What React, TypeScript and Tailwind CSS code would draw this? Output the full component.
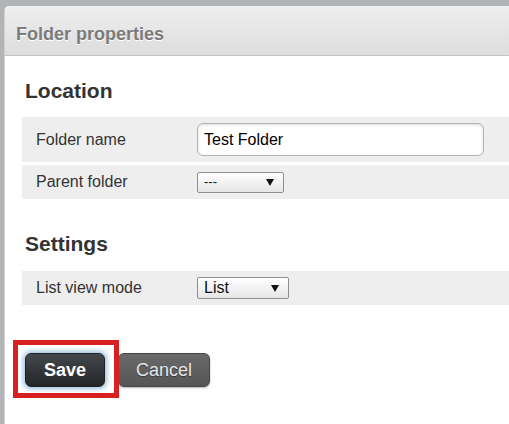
const Arrow = () => (
  <svg width="8" height="7" viewBox="0 0 8 7" className="shrink-0">
    <polygon points="0,0 8,0 4,7" fill="#111" />
  </svg>
);

const FakeSelect = ({ value, width, height, textSize }: { value: string; width: string; height: string; textSize: string }) => (
  <div
    className={`${width} ${height} flex items-center justify-between pl-[6px] pr-[9px] border border-[#8f8f8f] rounded-[2px] bg-gradient-to-b from-white to-[#e6e6e6] text-[#111] ${textSize}`}
  >
    <span>{value}</span>
    <Arrow />
  </div>
);

const Row = ({ label, children, height, className = "" }: { label: string; children: React.ReactNode; height: string; className?: string }) => (
  <div className={`flex items-center bg-[#eeeeee] ${height} ${className}`}>
    <div className="w-[175px] pl-[14px] text-[16px] text-[#333]">{label}</div>
    {children}
  </div>
);

export default function App() {
  return (
    <div className="h-[424px] overflow-hidden bg-[#b2b5b7] pl-[4px] pt-[6px] font-['Liberation_Sans',Arial,sans-serif]">
      <div className="h-full bg-white rounded-tl-[5px] border-l border-[#d0d0d0]">
        {/* header */}
        <div className="h-[50px] rounded-tl-[5px] bg-gradient-to-b from-[#efefef] to-[#dddddd] border-b border-[#c4c4c4] pl-[11px] pt-[18px]">
          <h1 className="text-[18px] leading-[21px] font-bold text-[#7b7b7b] [text-shadow:0_1px_0_#fff]">Folder properties</h1>
        </div>

        <div className="pl-[17px] pt-[23px]">
          <h2 className="ml-[3px] mb-[14px] text-[21px] leading-[24px] font-bold text-[#333]">Location</h2>
          <Row label="Folder name" height="h-[45px]">
            <div className="w-[287px] h-[33px] flex items-center pl-[6px] border border-[#b4b4b4] rounded-[6px] bg-white shadow-[inset_0_1px_3px_rgba(0,0,0,0.15)] text-[16px] text-black">
              Test Folder
            </div>
          </Row>
          <Row label="Parent folder" height="h-[34px]" className="mt-[3px]">
            <FakeSelect value="---" width="w-[87px]" height="h-[21px]" textSize="text-[13px]" />
          </Row>

          <h2 className="ml-[3px] mt-[33px] mb-[15px] text-[21px] leading-[24px] font-bold text-[#333]">Settings</h2>
          <Row label="List view mode" height="h-[34px]">
            <FakeSelect value="List" width="w-[92px]" height="h-[22px]" textSize="text-[16px]" />
          </Row>

          <div className="flex gap-[13px] mt-[48px] ml-[3px]">
            <div className="relative">
              <button className="w-[80px] h-[34px] rounded-[6px] border border-[#1e2124] bg-gradient-to-b from-[#44484c] to-[#232629] text-white text-[18px] font-bold shadow-[0_0_5px_2px_rgba(120,175,215,0.75)]">
                Save
              </button>
              <div className="absolute -left-[12px] -top-[13px] w-[106px] h-[58px] border-[5px] border-[#d7201f] pointer-events-none" />
            </div>
            <button className="w-[92px] h-[34px] rounded-[6px] border border-[#454545] bg-gradient-to-b from-[#6a6a6a] to-[#555555] text-[#e6e6e6] text-[18px] [text-shadow:0_1px_1px_rgba(0,0,0,0.4)] shadow-[0_1px_2px_rgba(0,0,0,0.3)]">
              Cancel
            </button>
          </div>
        </div>
      </div>
    </div>
  );
}
